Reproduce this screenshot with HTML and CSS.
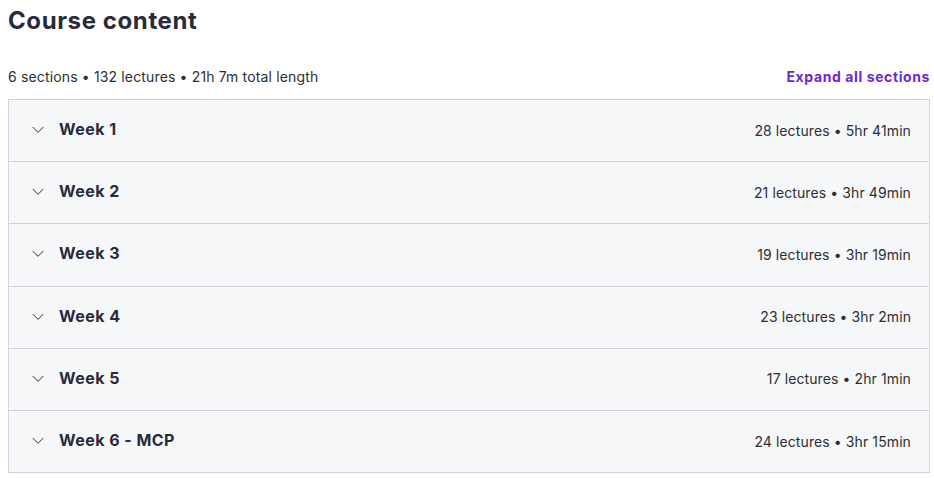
FILE: index.html
```html
<!DOCTYPE html>
<html>
<head>
<meta charset="utf-8">
<link rel="stylesheet" href="styles.css">
</head>
<body>
<div class="page">
  <h2 class="title">Course content</h2>
  <div class="meta">
    <span class="summary">6 sections • 132 lectures • 21h 7m total length</span>
    <button class="expand">Expand all sections</button>
  </div>
  <div class="sections">
    <div class="section"><div class="head"><div class="left"><svg class="chev" viewBox="0 0 24 24" width="16" height="16"><path d="M4.5 9.5l7.5 7.5 7.5-7.5"/></svg><span class="name">Week 1</span></div><span class="info">28 lectures • 5hr 41min</span></div></div>
    <div class="section"><div class="head"><div class="left"><svg class="chev" viewBox="0 0 24 24" width="16" height="16"><path d="M4.5 9.5l7.5 7.5 7.5-7.5"/></svg><span class="name">Week 2</span></div><span class="info">21 lectures • 3hr 49min</span></div></div>
    <div class="section"><div class="head"><div class="left"><svg class="chev" viewBox="0 0 24 24" width="16" height="16"><path d="M4.5 9.5l7.5 7.5 7.5-7.5"/></svg><span class="name">Week 3</span></div><span class="info">19 lectures • 3hr 19min</span></div></div>
    <div class="section"><div class="head"><div class="left"><svg class="chev" viewBox="0 0 24 24" width="16" height="16"><path d="M4.5 9.5l7.5 7.5 7.5-7.5"/></svg><span class="name">Week 4</span></div><span class="info">23 lectures • 3hr 2min</span></div></div>
    <div class="section"><div class="head"><div class="left"><svg class="chev" viewBox="0 0 24 24" width="16" height="16"><path d="M4.5 9.5l7.5 7.5 7.5-7.5"/></svg><span class="name">Week 5</span></div><span class="info">17 lectures • 2hr 1min</span></div></div>
    <div class="section"><div class="head"><div class="left"><svg class="chev" viewBox="0 0 24 24" width="16" height="16"><path d="M4.5 9.5l7.5 7.5 7.5-7.5"/></svg><span class="name">Week 6 - MCP</span></div><span class="info">24 lectures • 3hr 15min</span></div></div>
  </div>
</div>
</body>
</html>
```
FILE: styles.css
```css
html, body { margin: 0; padding: 0; background: #fff; }
body { font-family: Inter, "Noto Sans", sans-serif; color: #2d2f31; }
.page { padding: 0 4px 0 8px; }
.title { margin: 0; padding-top: 6px; font-size: 24px; line-height: 30px; font-weight: 700; letter-spacing: 0.6px; color: #2a2b3a; }
.meta { display: flex; justify-content: space-between; align-items: center; margin-top: 30px; height: 20px; }
.summary { font-size: 14px; color: #2d2f31; letter-spacing: 0.15px; }
.expand { background: none; border: 0; padding: 0; font-family: inherit; font-size: 14px; font-weight: 700; color: #6d28d2; cursor: pointer; letter-spacing: 0.6px; }
.sections { margin-top: 13px; border: 1px solid #d1d2e0; border-top: 0; }
.section { border-top: 1px solid #d1d2e0; }
.head { display: flex; justify-content: space-between; align-items: center; height: 61.2px; box-sizing: border-box; padding: 0 18px 1px 21px; background: #f6f7f9; border-radius: 4px; }
.left { display: flex; align-items: center; gap: 13px; margin-bottom: 2px; }
.chev { display: block; }
.chev path { fill: none; stroke: #2d2f31; stroke-width: 1.5; stroke-linecap: round; stroke-linejoin: round; }
.name { font-size: 16px; font-weight: 700; letter-spacing: 0.45px; color: #2a2b3a; }
.info { font-size: 14px; letter-spacing: 0.1px; }
```
